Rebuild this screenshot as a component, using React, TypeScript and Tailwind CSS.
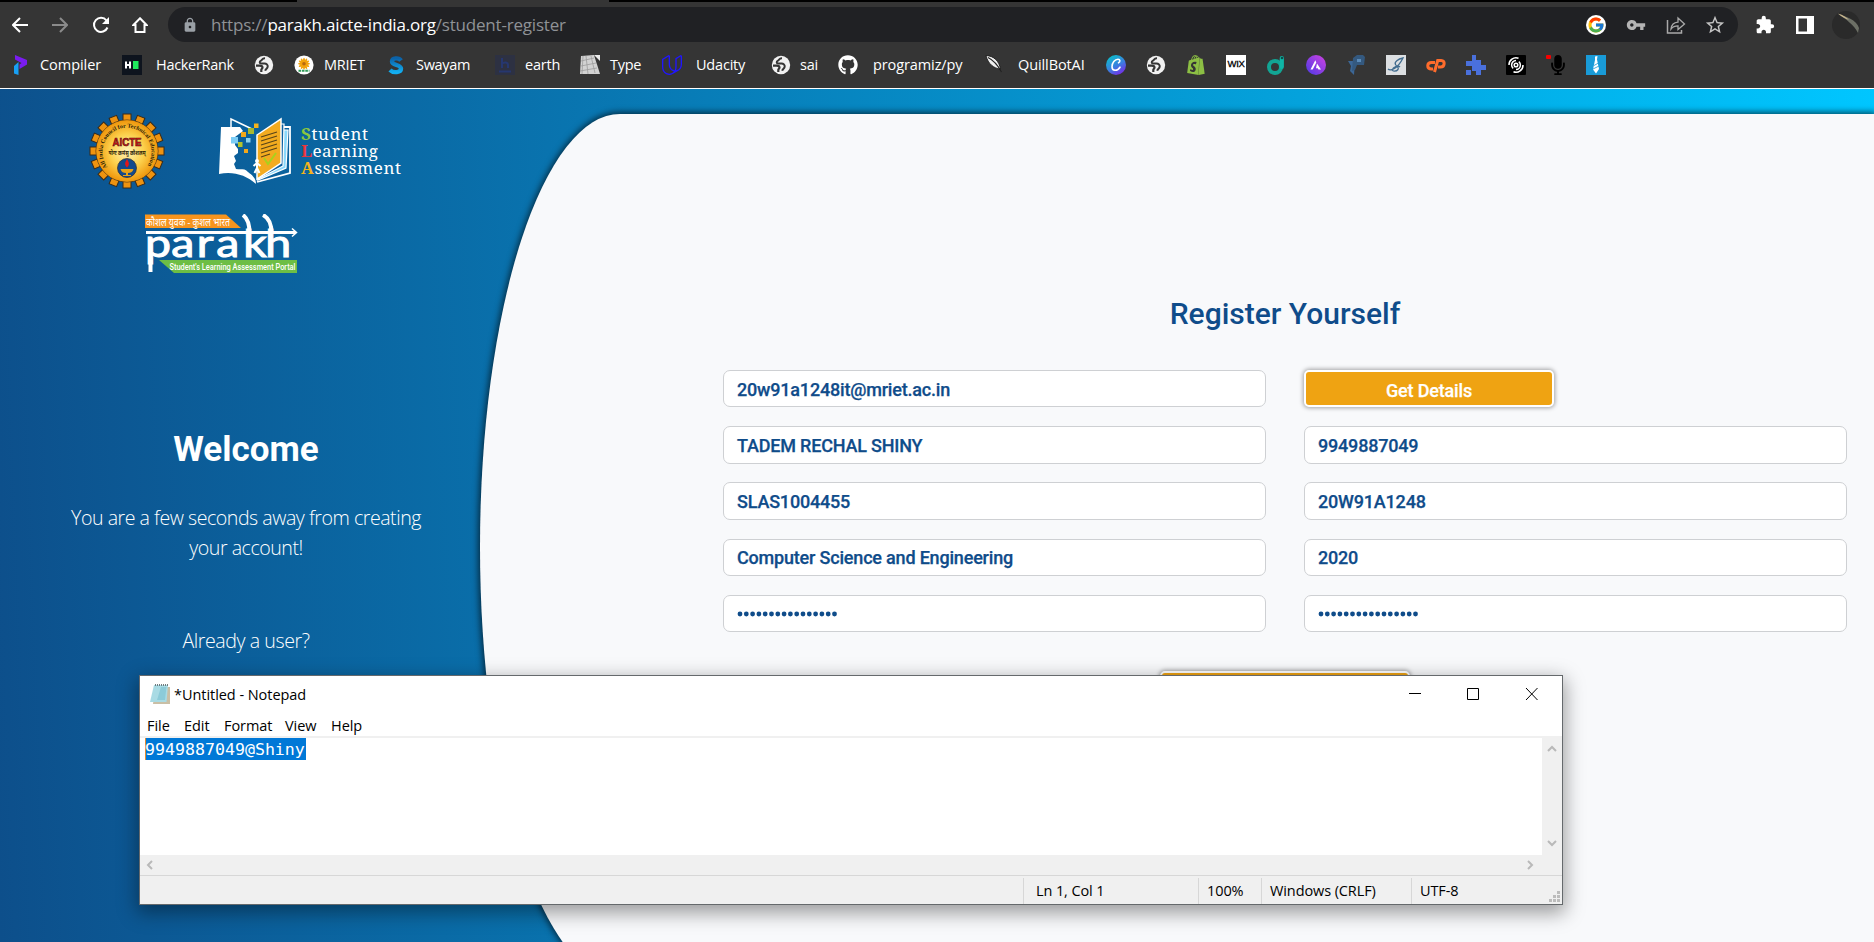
import React from "react";
import { FcGoogle } from "react-icons/fc";
import { FaGithub, FaMicrophone } from "react-icons/fa";
import { MdVpnKey, MdExtension, MdLock, MdStarOutline } from "react-icons/md";
import { SiShopify, SiUdacity } from "react-icons/si";

const Globe = () => (
  <svg viewBox="0 0 20 20" className="size-5">
    <circle cx="10" cy="10" r="9.200" fill="#f1f1f1" />
    <path
      d="M11 3.200C8 3 8.500 5 7 5.600 5 6.500 5.500 8.600 7.500 8.600h3c2 0 3.500 1.200 3.200 3-.3 2.200-2 2-2.500 4.200"
      fill="none"
      stroke="#353535"
      strokeWidth="2"
    />
    <path d="M2 10.600h3.500c2 0 3 .8 3 2 0 1-1.200 1.200-1.200 2.200v2.200" fill="none" stroke="#353535" strokeWidth="2.200" />
  </svg>
);

const Compiler = () => (
  <svg viewBox="0 0 14 20" className="h-5 w-3.5">
    <path d="M1 0l12 5v4.500L5.500 14V9.500l2-1.500L1 4.500z" fill="#7a1cf0" />
    <path d="M0 11l4.500-4v13L0 18.500z" fill="#18a0f5" />
  </svg>
);

const HackerRank = () => (
  <svg viewBox="0 0 20 20" className="size-5">
    <rect width="20" height="20" fill="#0e141e" />
    <path d="M4 6.500v7M8 6.500v7M4 10h4" stroke="#fff" strokeWidth="2" />
    <rect x="11" y="6" width="5.500" height="8" fill="#1ee85c" />
  </svg>
);

const Flower = () => (
  <svg viewBox="0 0 20 20" className="size-5">
    <circle cx="10" cy="10" r="9.600" fill="#fff" />
    {[0, 30, 60, 90, 120, 150].map((a) => (
      <ellipse key={a} cx="10" cy="8.800" rx="6" ry="1.400" fill="#f2a30c" transform={`rotate(${a} 10 8.800)`} />
    ))}
    <circle cx="10" cy="8.800" r="1.800" fill="#b86a10" />
    <path d="M4.500 15.800h11" stroke="#2f9b57" strokeWidth="2" strokeDasharray="2.600 .8" />
  </svg>
);

const Swayam = () => (
  <svg viewBox="0 0 16 20" className="h-5 w-4">
    <defs>
      <linearGradient id="sw" x1="0" y1="0" x2="0" y2="1">
        <stop offset="0" stopColor="#0b62a8" />
        <stop offset="1" stopColor="#12aef0" />
      </linearGradient>
    </defs>
    <path
      d="M13 5.500C11 2.500 4 2.500 4 6.500s9 3 9 7-7.500 5-11 1.500"
      fill="none"
      stroke="url(#sw)"
      strokeWidth="4.400"
    />
  </svg>
);

const Earth = () => (
  <svg viewBox="0 0 20 20" className="size-5">
    <rect width="20" height="20" fill="#2d3142" />
    <path d="M7 3v10M7 9c2-2.500 6-2 6 1v3M4 16.500h12" fill="none" stroke="#26376f" strokeWidth="2" />
  </svg>
);

const Keyboard = () => (
  <svg viewBox="0 0 20 20" className="size-5">
    <path d="M1 1l13-1 6 19H0z" fill="#d2d2d2" />
    <path d="M1 6l13-3M1 11l15-3M0 16l17-3M6 1l2 18M11 1l4 17M3 1l-1 18" stroke="#9c9c9c" strokeWidth=".8" />
    <path d="M14 0h6v6z" fill="#e9e9e9" />
  </svg>
);

const Quill = () => (
  <svg viewBox="0 0 20 20" className="size-5">
    <path d="M1 .5C9 1 14 6 15.500 14 9 13.500 3 9 1 .5z" fill="#f0f0f0" stroke="#111" strokeWidth=".8" />
    <path d="M3 2.500c6 3 10 8 13.500 14.500" fill="none" stroke="#222" strokeWidth="1.100" />
  </svg>
);

const Canva = () => (
  <svg viewBox="0 0 20 20" className="size-5">
    <defs>
      <linearGradient id="cv" x1=".2" y1="0" x2=".8" y2="1">
        <stop offset="0" stopColor="#08c2c9" />
        <stop offset=".55" stopColor="#3c7de0" />
        <stop offset="1" stopColor="#7d22e8" />
      </linearGradient>
    </defs>
    <circle cx="10" cy="10" r="10" fill="url(#cv)" />
    <path
      d="M12.500 7.800c2-.8 1.800-3.600-.5-3.600-3.200 0-6 3.900-6 7.500 0 4.500 5.300 4.800 8 .5"
      fill="none"
      stroke="#fff"
      strokeWidth="1.600"
      strokeLinecap="round"
    />
  </svg>
);

const Wix = () => (
  <div className="flex size-5 items-center justify-center bg-white font-['Liberation_Sans',sans-serif] text-[9.500px] tracking-[-0.3px] text-black [-webkit-text-stroke:0.3px_#000]">
    WIX
  </div>
);

const TealD = () => (
  <svg viewBox="0 0 20 20" className="size-5">
    <circle cx="9" cy="12" r="6" fill="none" stroke="#12a594" strokeWidth="4" />
    <path d="M15.800 3v9" stroke="#0fb5a6" strokeWidth="4.200" strokeLinecap="round" />
    <circle cx="16" cy="3" r="1.300" fill="#0b4d4a" />
  </svg>
);

const Astra = () => (
  <svg viewBox="0 0 20 20" className="size-5">
    <defs>
      <linearGradient id="as" x1="0" y1="1" x2="1" y2="0">
        <stop offset="0" stopColor="#4a39e6" />
        <stop offset="1" stopColor="#d143e0" />
      </linearGradient>
    </defs>
    <circle cx="10" cy="10" r="10" fill="url(#as)" />
    <path d="M9.300 5.200l1 2.200-3.600 7H4.500zM11 8.500l4 6h-2.600l-.6-1.300H10z" fill="#fff" />
  </svg>
);

const BlueP = () => (
  <svg viewBox="0 0 20 20" className="size-5">
    <path d="M2 6h7l-1 14-4-4 1-5z" fill="#3c6796" />
    <path d="M7 3l4-3h6l2 2-1 8h-7l-2 5-3 1z" fill="#34597f" />
    <path d="M11 4h4v3h-4z" fill="#5b8bb9" />
  </svg>
);

const Book = () => (
  <svg viewBox="0 0 20 20" className="size-5">
    <rect width="20" height="20" fill="#dcdfe2" />
    <path
      d="M2 14c2 2 9 1 15-11-5 1-9 4-7.500 6.500s4 3 2.500 5-6 2.500-5.500 0S12 10 14 12"
      fill="none"
      stroke="#416c8f"
      strokeWidth="1.300"
    />
  </svg>
);

const CPanel = () => (
  <svg viewBox="0 0 20 20" className="size-5" fill="none" stroke="#ff6c2c" strokeWidth="3">
    <path d="M9 7.500H5.500C.5 7.500.5 14 5.500 14H7" />
    <path d="M8.500 17l3.200-11.500h3.500c4.500 0 3.500 6.500-.5 6.500H12" />
  </svg>
);

const Puzzle = () => (
  <svg viewBox="0 0 20 20" className="size-5">
    <path d="M6 0h4v5h5v5h5v5h-5v5h-5v-4H6V11H0V6h6zM0 15h5v5H0z" fill="#4a70dc" />
  </svg>
);

const Spiral = () => (
  <svg viewBox="0 0 20 20" className="size-5" fill="none" stroke="#fff">
    <rect width="20" height="20" rx="1" fill="#000" stroke="none" />
    <circle cx="10" cy="10" r="1.800" strokeWidth="1.500" />
    <path d="M10 5.600a4.400 4.400 0 0 0-4.400 4.400c0 1.500.6 2.600 1.600 3.400M10 14.400a4.400 4.400 0 0 0 4.400-4.400c0-1.500-.6-2.600-1.600-3.400" strokeWidth="1.500" />
    <path d="M12.500 3.200A7 7 0 0 0 3 10M7.500 16.800A7 7 0 0 0 17 10" strokeWidth="1.500" />
  </svg>
);

const Mic = () => (
  <div className="relative flex size-5 items-center justify-center">
    <FaMicrophone className="ml-1 size-5 text-black" />
    <span className="absolute left-0 top-0 h-[4px] w-[5px] rounded-[1px] bg-[#f60000]" />
  </div>
);

const Tie = () => (
  <svg viewBox="0 0 20 20" className="size-5">
    <rect width="20" height="20" fill="#199bd8" />
    <path d="M9 1.500l2.500-.5-.5 3.500L13 14l-3 4.500L7 14.500 9 5z" fill="#fff" />
    <path d="M8 10.500l4.500-2.500M7 14l6-3" stroke="#199bd8" strokeWidth=".8" />
  </svg>
);

type Bookmark = { icon: React.ReactNode; label: string; box: string; text: string };

const namedBookmarks: Bookmark[] = [
  { icon: <Compiler />, label: "Compiler", box: "w-[108px]", text: "ml-3 tracking-[-0.05px]" },
  { icon: <HackerRank />, label: "HackerRank", box: "w-[132px]", text: "ml-[14px] tracking-[-0.3px]" },
  { icon: <Globe />, label: "", box: "w-[40px]", text: "" },
  { icon: <Flower />, label: "MRIET", box: "w-[94px]", text: "ml-[10px] tracking-[-0.3px]" },
  { icon: <Swayam />, label: "Swayam", box: "w-[107px]", text: "ml-[12px] tracking-[-0.3px]" },
  { icon: <Earth />, label: "earth", box: "w-[85px]", text: "ml-[10px] tracking-[-0.2px]" },
  { icon: <Keyboard />, label: "Type", box: "w-[82px]", text: "ml-[10px] tracking-[-0.3px]" },
  {
    icon: <SiUdacity className="size-5 text-[#2015ff]" />,
    label: "Udacity",
    box: "w-[109px]",
    text: "ml-[14px] tracking-[-0.2px]",
  },
  { icon: <Globe />, label: "sai", box: "w-[67px]", text: "ml-[9px] tracking-[-0.2px]" },
  {
    icon: <FaGithub className="size-5 text-white" />,
    label: "programiz/py",
    box: "w-[147px]",
    text: "ml-[15px] tracking-[-0.100px]",
  },
  { icon: <Quill />, label: "QuillBotAI", box: "w-[121px]", text: "ml-[13px] tracking-[-0.100px]" },
];

const iconBookmarks = [
  <Canva />,
  <Globe />,
  <SiShopify className="size-5 text-[#8cbf44]" />,
  <Wix />,
  <TealD />,
  <Astra />,
  <BlueP />,
  <Book />,
  <CPanel />,
  <Puzzle />,
  <Spiral />,
  <Mic />,
  <Tie />,
];

function Browser() {
  return (
    <header className="flex h-[89px] shrink-0 flex-col border-b border-white bg-[#353535]">
      <div className="flex h-[2px] bg-black">
        <div className="ml-[297px] h-[2px] w-[312px] bg-[#353535]" />
      </div>
      <div className="mt-[5px] flex h-[35px] items-center">
        <div className="flex w-[168px] items-center gap-[24px] pl-[12px]">
          <svg viewBox="0 0 16 16" className="size-4" fill="none" stroke="#fff" strokeWidth="2">
            <path d="M16 8H1.500M8 1L1 8l7 7" />
          </svg>
          <svg viewBox="0 0 16 16" className="size-4" fill="none" stroke="#8b8b8b" strokeWidth="2">
            <path d="M0 8h14.500M8 1l7 7-7 7" />
          </svg>
          <svg viewBox="0 0 18 18" className="size-[18px]" fill="none" stroke="#fff" strokeWidth="2">
            <path d="M15.500 11.500A7 7 0 1 1 14.500 4.500L16 6" />
            <path d="M17 1v7h-7z" fill="#fff" stroke="none" />
          </svg>
          <svg viewBox="0 0 16 16" className="-ml-[2px] size-4" fill="none" stroke="#fff" strokeWidth="2">
            <path d="M8 1.300L14.500 8H12.500v7h-9V8H1.500z" />
          </svg>
        </div>
        <div className="flex h-[35px] w-[1570px] items-center rounded-full bg-[#202124]">
          <MdLock className="ml-[14px] size-4 text-[#9aa0a6]" />
          <div className="ml-[13px] flex-1 text-[17px] tracking-[-0.2px] text-[#8f9296]">
            https://<span className="text-white">parakh.aicte-india.org</span>/student-register
          </div>
          <div className="flex items-center pr-[12px]">
            <span className="mr-[20px] flex size-5 items-center justify-center rounded-full bg-white">
              <FcGoogle className="size-[18px]" />
            </span>
            <MdVpnKey className="mr-[20px] size-5 text-[#b4b4b4]" />
            <svg viewBox="0 0 20 20" className="mr-[18px] size-5" fill="none" stroke="#a9a9a9" strokeWidth="1.500">
              <path d="M1.500 5v13h14v-3" />
              <path d="M5 14c.5-4.500 3-6.500 7-6.800V3l6.500 6-6.500 5.500v-3.600c-3 0-5 .6-7 3.100z" strokeWidth="1.300" />
            </svg>
            <MdStarOutline className="size-[22px] text-[#c4c4c4]" />
          </div>
        </div>
        <MdExtension className="ml-[17px] size-5 text-white" />
        <svg viewBox="0 0 18 18" className="ml-[21px] size-[18px]">
          <path d="M0 0h18v18H0zM2.500 2.500v13H11v-13z" fill="#fff" fillRule="evenodd" />
        </svg>
        <svg viewBox="0 0 28 28" className="ml-[18px] size-7">
          <circle cx="14" cy="14" r="14" fill="#2a2a2a" />
          <path d="M6 3c7 2 19 6 21 14l-1 5C22 14 14 8 6 3z" fill="#6d7066" />
          <path d="M6 2.500c5 1.500 9 4 11 6.500-4-1.500-8-3.500-11-6.500z" fill="#c9b68d" />
        </svg>
      </div>
      <div className="flex h-[45px] items-center pl-[14px] text-[14.500px] text-white">
        {namedBookmarks.map((b, i) => (
          <div key={i} className={`flex shrink-0 items-center whitespace-nowrap ${b.box}`}>
            {b.icon}
            <span className={b.text}>{b.label}</span>
          </div>
        ))}
        <div className="flex gap-5">
          {iconBookmarks.map((icon, i) => (
            <div key={i}>{icon}</div>
          ))}
        </div>
      </div>
    </header>
  );
}

function AicteLogo() {
  const teeth = Array.from({ length: 16 }, (_, i) => i * 22.5);
  return (
    <svg viewBox="0 0 76 76" className="h-[76px] w-[76px]">
      <defs>
        <radialGradient id="gold">
          <stop offset="0" stopColor="#fff3b8" />
          <stop offset=".55" stopColor="#fcd04c" />
          <stop offset="1" stopColor="#ef970c" />
        </radialGradient>
        <path id="arc" d="M18.500 54A24.500 24.500 0 1 1 57.500 54" />
      </defs>
      {teeth.map((a) => (
        <rect
          key={a}
          x="34"
          y="1"
          width="8"
          height="10"
          fill="#ee9310"
          stroke="#3b2b18"
          strokeWidth="1"
          transform={`rotate(${a} 38 38)`}
        />
      ))}
      <circle cx="38" cy="38" r="31" fill="#f0990f" stroke="#3b2b18" strokeWidth=".8" />
      <circle cx="38" cy="38" r="30.700" fill="url(#gold)" />
      <text fontSize="5.800" fontWeight="700" fill="#2c2208" fontFamily="Liberation Serif, serif">
        <textPath href="#arc" textLength="106" lengthAdjust="spacingAndGlyphs">
          All India Council for Technical Education
        </textPath>
      </text>
      <text
        x="38"
        y="32.500"
        textAnchor="middle"
        textLength="29"
        lengthAdjust="spacingAndGlyphs"
        fontSize="11"
        fontWeight="900"
        fill="#d21419"
        stroke="#4e0c0c"
        strokeWidth=".6"
        fontFamily="Liberation Sans, sans-serif"
      >
        AICTE
      </text>
      <text
        x="38"
        y="42"
        textAnchor="middle"
        textLength="37"
        lengthAdjust="spacingAndGlyphs"
        fontSize="6"
        fontWeight="700"
        fill="#2c2208"
        fontFamily="Noto Sans, sans-serif"
      >
        योगः कर्मसु कौशलम्
      </text>
      <circle cx="38" cy="55" r="9.500" fill="#144a8c" stroke="#2a2a33" strokeWidth=".7" />
      <path d="M38 46c2.500 4 2.500 6 0 8.500-2.500-2.500-2.500-4.500 0-8.500z" fill="#e3161a" />
      <path d="M31.500 56h13c-.8 3-3 4-5.500 4v2h3v1h-8v-1h3v-2c-2.500 0-4.700-1-5.500-4z" fill="#e8a217" />
    </svg>
  );
}

function SlaLogo() {
  return (
    <svg viewBox="0 0 184 68" className="h-[68px] w-[184px]">
      <path
        d="M2 10h19l3 4-8 6v8l3 4v4l-4 3 2 5-2 3 2 5c4 1 9-1 12 3 4 3 8 6 8 12C27 58 14 54 0 57z"
        fill="#fff"
      />
      <path d="M12 11V2l21 10" fill="none" stroke="#fff" strokeWidth="1.500" />
      <rect x="12" y="20" width="7" height="6.500" fill="#7dcdf5" />
      <rect x="22" y="15" width="5" height="5" fill="#f2a71b" />
      <rect x="29" y="11" width="6" height="6" fill="#a6b832" />
      <rect x="35" y="6.500" width="4.500" height="4.500" fill="#f5b31c" />
      <rect x="19" y="25" width="4.500" height="5" fill="#b5c42d" />
      <rect x="27" y="21" width="4.500" height="4.500" fill="#8bd2ef" />
      <rect x="25" y="32" width="4" height="4" fill="#f2a71b" />
      <path d="M62 10h9v46L38 65" fill="none" stroke="#fff" strokeWidth="1.800" />
      <path d="M62 13h7l-2 38-28 12z" fill="#8bd9fb" stroke="#fff" strokeWidth="1.200" />
      <path d="M61 7h4l-1 42-25 13z" fill="#0c5f9f" stroke="#fff" strokeWidth="1.200" />
      <path d="M38 18L62 2v44L38 62z" fill="#f3ab1f" stroke="#fff" strokeWidth="1.500" />
      <path
        d="M42 20l16-5M42 24l16-5M42 28l16-5M42 32l16-5M42 36l16-5M42 40l9-3"
        stroke="#574319"
        strokeWidth="1.100"
      />
      <path d="M45 41l4 6 8-11" fill="none" stroke="#a9d11c" strokeWidth="2" />
      <path d="M34.500 49l3.500-3 3.500 3M38 46v5l-2.500 5M38 51l2.500 5" stroke="#fff" strokeWidth="2" fill="none" />
      <circle cx="38" cy="44" r="2" fill="#fff" />
      <g fontFamily="Noto Serif, DejaVu Serif, Liberation Serif, serif" fontSize="17" fill="#fff">
        <text x="82" y="22.500" textLength="67">
          <tspan fill="#8cc63f" fontWeight="700">S</tspan>tudent
        </text>
        <text x="82" y="39.500" textLength="77">
          <tspan fill="#e8383d" fontWeight="700">L</tspan>earning
        </text>
        <text x="82" y="56.500" textLength="100">
          <tspan fill="#f5b31c" fontWeight="700">A</tspan>ssessment
        </text>
      </g>
    </svg>
  );
}

function ParakhLogo() {
  return (
    <svg viewBox="0 0 153 60" className="h-[60px] w-[153px]">
      <path d="M0 .5h81l15 13.500H0z" fill="#f7941d" />
      <path d="M14 46h138v13H29z" fill="#6dbe45" />
      <text
        x="1"
        y="11.500"
        textLength="84"
        lengthAdjust="spacingAndGlyphs"
        fontSize="11"
        fill="#fff"
        fontFamily="Noto Sans, sans-serif"
      >
        कौशल युवक - कुशल भारत
      </text>
      <path d="M1 18.500h150" stroke="#fff" strokeWidth="2.800" />
      <path d="M147 14.500l4.500 4-4.500 4" fill="none" stroke="#fff" strokeWidth="1.500" />
      <text
        transform="scale(1.22 1)"
        x="0 21.500 42.500 58.500 80.500 98.500"
        y="43.500"
        fontSize="38"
        fill="#fff"
        stroke="#fff"
        strokeWidth="1"
        fontFamily="Lato, sans-serif"
      >
        parakh
      </text>
      <path
        d="M5.500 44v14M98 1c4 3 6.500 8 6.500 18M118 1c6 3 8.500 8 8.500 18"
        fill="none"
        stroke="#fff"
        strokeWidth="4"
      />
      <text
        x="24.500"
        y="55.800"
        textLength="126"
        lengthAdjust="spacingAndGlyphs"
        fontSize="9"
        fontWeight="500"
        fill="#fff"
        fontFamily="Roboto, sans-serif"
      >
        Student's Learning Assessment Portal
      </text>
    </svg>
  );
}

function Field({ value }: { value: string }) {
  return (
    <div className="flex h-[37.600px] items-center rounded-[7px] border border-[#ced0d3] bg-white px-[13px]">
      <span className="pt-[2.400px] text-[18px] leading-none tracking-[-0.190px] [-webkit-text-stroke:0.25px_#0f4c8a]">
        {value}
      </span>
    </div>
  );
}

function Dots() {
  return (
    <div className="flex h-[37.600px] items-center rounded-[7px] border border-[#ced0d3] bg-white px-[13px]">
      <svg viewBox="0 0 102 6" className="h-1.5 w-[102px]" fill="#0f4c8a">
        {Array.from({ length: 16 }, (_, i) => (
          <circle key={i} cx={3 + i * 6.3} cy="3" r="2.400" />
        ))}
      </svg>
    </div>
  );
}

function Page() {
  return (
    <main className="flex min-h-0 flex-1 bg-linear-[88deg,#0d4f8b,#00c6ff]">
      <section className="flex w-[480px] shrink-0 flex-col pl-[12px] text-center text-white">
        <div className="flex items-start pl-[77px] pt-[24px]">
          <AicteLogo />
          <div className="ml-[54px] mt-[4px]">
            <SlaLogo />
          </div>
        </div>
        <div className="ml-[133px] mt-[25px]">
          <ParakhLogo />
        </div>
        <h1 className="mt-[155px] font-[Roboto,sans-serif] text-[35px] font-bold leading-[42px]">Welcome</h1>
        <p className="mt-[32px] text-[19.600px] font-light leading-[30px] tracking-[-0.480px]">
          You are a few seconds away from creating
          <br />
          your account!
        </p>
        <p className="mt-[63px] text-[19.600px] font-light leading-[30px] tracking-[-0.420px]">Already a user?</p>
      </section>
      <section className="mt-[25px] flex h-[866px] flex-1 flex-col rounded-l-[140px_433px] bg-[#f8f9fb] pl-[243px] pr-[27px] pt-[180px] font-[Roboto,sans-serif] font-medium text-[#0f4c8a] shadow-[0_0_6px_2px_rgba(0,0,0,0.6)]">
        <h2 className="pt-px text-center text-[30px] leading-[38px]">Register Yourself</h2>
        <div className="mt-[36.800px] grid grid-cols-2 gap-x-[38px] gap-y-[18.650px]">
          <Field value="20w91a1248it@mriet.ac.in" />
          <button className="h-[37.600px] w-[250px] rounded-[5px] border-2 border-white bg-[#efa312] pt-[4px] text-[18px] leading-none tracking-[-0.17px] text-white shadow-[0_0_4px_1px_rgba(0,0,0,0.35)] [-webkit-text-stroke:0.25px_#fff]">
            Get Details
          </button>
          <Field value="TADEM RECHAL SHINY" />
          <Field value="9949887049" />
          <Field value="SLAS1004455" />
          <Field value="20W91A1248" />
          <Field value="Computer Science and Engineering" />
          <Field value="2020" />
          <Dots />
          <Dots />
        </div>
        <div className="mx-auto mt-[38.500px] h-[38px] w-[250px] rounded-[5px] border-2 border-white bg-[#efa312] shadow-[0_0_4px_1px_rgba(0,0,0,0.35)]" />
      </section>
    </main>
  );
}

function Chevron({ d }: { d: string }) {
  return (
    <svg viewBox="0 0 10 10" className="size-[10px]">
      <path d={d} fill="none" stroke="#b9b9b9" strokeWidth="2" />
    </svg>
  );
}

function Notepad() {
  return (
    <div className="absolute left-[139px] top-[675px] flex h-[230px] w-[1424px] flex-col border border-[#3f4347]/80 bg-white text-[14.500px] text-black shadow-[0_6px_18px_2px_rgba(0,0,0,0.38)]">
      <div className="flex h-[36px] shrink-0 items-center pl-[10px]">
        <svg viewBox="0 0 20 20" className="size-5">
          <path d="M5 3h15v17H3z" fill="#c9bfa6" />
          <path d="M4 1h14l-1.500 17H0z" fill="#a9dbe4" />
          <path d="M11 3h5.500L15 16H7z" fill="#8ccbd8" />
          <path d="M5 1h13" stroke="#6f7c80" strokeWidth="1.800" strokeDasharray="1 1" />
        </svg>
        <span className="ml-[4px] flex-1 pt-[2px] tracking-[-0.05px]">*Untitled - Notepad</span>
        <svg viewBox="0 0 130 14" className="mr-[24px] h-[14px] w-[130px]" fill="none" stroke="#000" strokeWidth="1">
          <path d="M1 6.500h12" />
          <path d="M59.500 1.500h11v11h-11z" />
          <path d="M118 1l11.500 12M129.500 1L118 13" />
        </svg>
      </div>
      <nav className="flex h-[26px] shrink-0 items-center border-b-2 border-[#f0f0f0] pl-[7px] pt-[4px] tracking-[-0.05px]">
        <span className="w-[37px]">File</span>
        <span className="w-[40px]">Edit</span>
        <span className="w-[61px]">Format</span>
        <span className="w-[46px]">View</span>
        <span>Help</span>
      </nav>
      <div className="flex h-[117px] shrink-0">
        <div className="flex-1 pl-[5px]">
          <span className="inline-block h-[22px] w-[161px] border-l border-[#e88b2e] bg-[#0078d7] align-top font-['DejaVu_Sans_Mono',monospace] text-[16.600px] leading-[24px] text-white">
            <span className="-ml-px">9949887049@Shiny</span>
          </span>
        </div>
        <div className="flex w-[20px] flex-col items-center justify-between bg-[#f0f0f0] pb-[6px] pt-[5px]">
          <Chevron d="M1 8l4-4 4 4" />
          <Chevron d="M1 2l4 4 4-4" />
        </div>
      </div>
      <div className="flex h-[20px] shrink-0 items-center justify-between bg-[#f0f0f0] pl-[5px] pr-[27px]">
        <Chevron d="M7 1L3 5l4 4" />
        <Chevron d="M3 1l4 4-4 4" />
      </div>
      <div className="flex flex-1 items-stretch border-t border-[#d7d7d7] bg-[#f0f0f0] pt-[2px] leading-[26px] tracking-[-0.1px]">
        <div className="w-[884px] border-r border-[#d7d7d7]" />
        <div className="w-[175px] border-r border-[#d7d7d7] pl-[12px]">Ln 1, Col 1</div>
        <div className="w-[63px] border-r border-[#d7d7d7] pl-[8px]">100%</div>
        <div className="w-[150px] border-r border-[#d7d7d7] pl-[8px]">Windows (CRLF)</div>
        <div className="flex-1 pl-[8px]">UTF-8</div>
        <svg viewBox="0 0 12 12" className="mb-px mr-px size-3 self-end" fill="#bcbcbc">
          <path d="M8 0h3v3H8zM4 4h3v3H4zM8 4h3v3H8zM0 8h3v3H0zM4 8h3v3H4zM8 8h3v3H8z" />
        </svg>
      </div>
    </div>
  );
}

export default function App() {
  return (
    <div className="relative flex h-[942px] w-[1874px] flex-col overflow-hidden font-['Open_Sans','Noto_Sans',sans-serif]">
      <Browser />
      <Page />
      <Notepad />
    </div>
  );
}
